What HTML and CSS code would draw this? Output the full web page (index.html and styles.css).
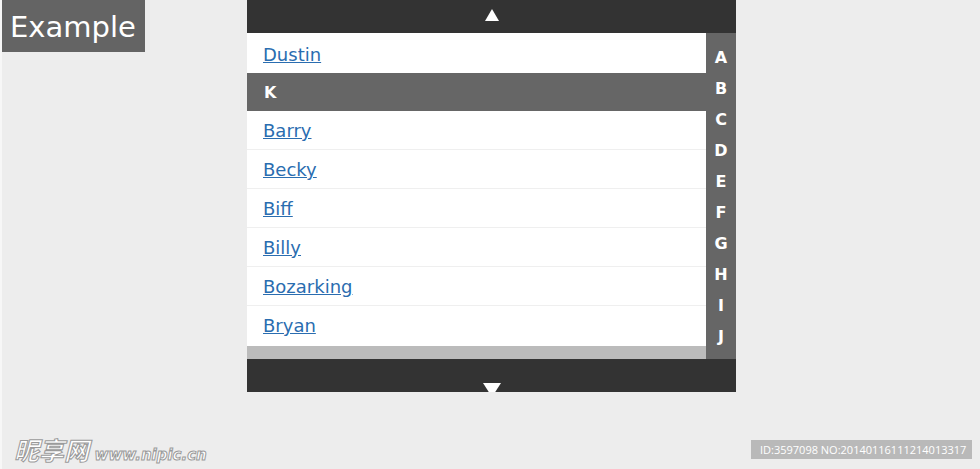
FILE: index.html
```html
<!DOCTYPE html>
<html lang="en">
<head>
  <meta charset="UTF-8">
  <meta name="viewport" content="width=device-width, initial-scale=1.0">
  <title>Example</title>
  <link rel="stylesheet" href="styles.css">
</head>
<body>
  <div class="page">
    <div class="badge">Example</div>

    <!-- Indexed list -->
    <div class="widget">
      <div class="scroll-btn up"><span class="arrow-up"></span></div>
      <div class="widget-body">
        <ul class="list">
          <li class="item"><a href="#">Dustin</a></li>
          <li class="group">K</li>
          <li class="item"><a href="#">Barry</a></li>
          <li class="item"><a href="#">Becky</a></li>
          <li class="item"><a href="#">Biff</a></li>
          <li class="item"><a href="#">Billy</a></li>
          <li class="item"><a href="#">Bozarking</a></li>
          <li class="item last"><a href="#">Bryan</a></li>
          <li class="track"></li>
        </ul>
        <ul class="index">
          <li>A</li>
          <li>B</li>
          <li>C</li>
          <li>D</li>
          <li>E</li>
          <li>F</li>
          <li>G</li>
          <li>H</li>
          <li>I</li>
          <li>J</li>
        </ul>
      </div>
      <div class="scroll-btn down"><span class="arrow-down"></span></div>
    </div>
  </div>

  <div class="page-foot">
    <div class="watermark"><span class="wm-cn">昵享网</span> <span class="wm-url">www.nipic.cn</span></div>
    <div class="stamp">ID:3597098 NO:20140116111214013317</div>
  </div>
</body>
</html>
```

FILE: styles.css
```css
body {
  margin: 0;
  background: #ededed;
  border-left: 2px solid #f7f7f7;
  font-family: "DejaVu Sans", Verdana, sans-serif;
  height: 469px;
  box-sizing: border-box;
  overflow: hidden;
}
.page {
  display: flex;
  align-items: flex-start;
}
.badge {
  width: 143px;
  height: 52px;
  line-height: 55px;
  background: #646464;
  color: #fff;
  font-size: 29px;
  padding-left: 8px;
  box-sizing: border-box;
}
.widget {
  width: 489px;
  margin-left: 102px;
}
.scroll-btn {
  background: #333;
  height: 33px;
  position: relative;
  overflow: hidden;
}
.arrow-up {
  position: absolute;
  left: 238px;
  top: 9px;
  border-left: 7px solid transparent;
  border-right: 7px solid transparent;
  border-bottom: 12px solid #fff;
}
.arrow-down {
  position: absolute;
  left: 236px;
  top: 24px;
  border-left: 9px solid transparent;
  border-right: 9px solid transparent;
  border-top: 14px solid #fff;
}
.widget-body {
  display: flex;
}
ul {
  list-style: none;
  margin: 0;
  padding: 0;
}
.list {
  flex: 1;
  background: #fff;
}
.item {
  height: 39px;
  line-height: 36px;
  padding: 2px 0 0 16px;
  border-bottom: 1px solid #efefef;
  box-sizing: border-box;
  font-size: 18px;
}
.item:first-child {
  height: 40px;
  line-height: 40px;
  border-bottom: none;
}
.item.last {
  height: 40px;
  border-bottom: none;
}
.item a {
  color: #2a6db0;
}
.group {
  height: 38px;
  line-height: 40px;
  background: #666;
  color: #fff;
  font-weight: bold;
  font-size: 16px;
  padding-left: 17px;
}
.track {
  height: 13px;
  background: #bbb;
}
.index {
  width: 30px;
  background: #666;
  color: #fff;
  font-weight: bold;
  font-size: 16px;
  text-align: center;
  padding-top: 9px;
}
.index li {
  height: 31px;
  line-height: 31px;
}
.page-foot {
  display: flex;
  justify-content: space-between;
  align-items: center;
  margin-top: 44px;
  padding: 0 8px 0 12px;
}
.watermark {
  color: #fff;
  -webkit-text-stroke: 1px #9a9a9a;
  font-weight: bold;
  white-space: nowrap;
  height: 26px;
  line-height: 26px;
}
.wm-cn {
  font-family: "Noto Sans CJK SC", sans-serif;
  font-size: 25px;
  font-style: italic;
}
.wm-url {
  font-family: "DejaVu Sans", sans-serif;
  font-size: 15px;
  font-style: italic;
}
.stamp {
  background: #b9b9b9;
  color: #fff;
  font-family: "Open Sans", sans-serif;
  font-size: 11px;
  height: 19px;
  line-height: 19px;
  width: 221px;
  padding-left: 9px;
  box-sizing: border-box;
}
```
